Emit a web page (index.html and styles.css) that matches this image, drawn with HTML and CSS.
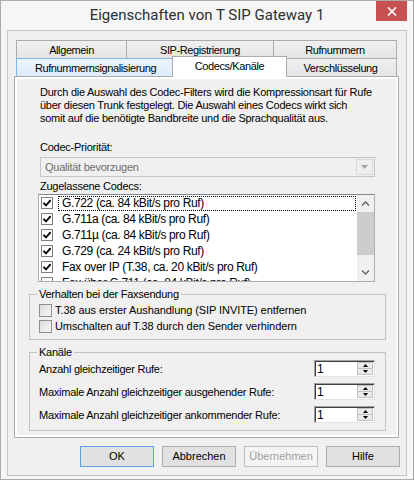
FILE: index.html
```html
<!DOCTYPE html>
<html lang="de">
<head>
    <meta charset="UTF-8">
    <meta name="viewport" content="width=device-width, initial-scale=1.0">
    <title>Eigenschaften von T SIP Gateway 1</title>
    <link rel="stylesheet" href="styles.css">
</head>
<body>
    <div class="window">
        <div class="titlebar">
            <span class="title">Eigenschaften von T SIP Gateway 1</span>
            <span class="close">
                <svg width="10" height="9" viewBox="0 0 10 9"><path d="M1 0.5 L9 8.5 M9 0.5 L1 8.5" stroke="#fff" stroke-width="1.7"/></svg>
            </span>
        </div>

        <div class="client">
            <div class="tabrow back">
                <div class="tab">Allgemein</div>
                <div class="tab">SIP-Registrierung</div>
                <div class="tab">Rufnummern</div>
            </div>
            <div class="tabrow front">
                <div class="tab hot">Rufnummernsignalisierung</div>
                <div class="tab active">Codecs/Kanäle</div>
                <div class="tab">Verschlüsselung</div>
            </div>

            <div class="pane">
                <div class="page">
                    <p class="intro">Durch die Auswahl des Codec-Filters wird die Kompressionsart für Rufe<br>über diesen Trunk festgelegt. Die Auswahl eines Codecs wirkt sich<br>somit auf die benötigte Bandbreite und die Sprachqualität aus.</p>

                    <div class="label first">Codec-Priorität:</div>
                    <div class="combo">
                        <span>Qualität bevorzugen</span>
                        <span class="drop">
                            <svg width="7" height="4" viewBox="0 0 7 4"><path d="M0 0 H7 L3.5 4 Z" fill="#a6a6a6"/></svg>
                        </span>
                    </div>

                    <div class="label">Zugelassene Codecs:</div>
                    <div class="listbox">
                        <ul class="items">
                            <li class="focus"><span class="lcheck on"></span><span class="name">G.722 (ca. 84 kBit/s pro Ruf)</span></li>
                            <li><span class="lcheck on"></span><span class="name">G.711a (ca. 84 kBit/s pro Ruf)</span></li>
                            <li><span class="lcheck on"></span><span class="name">G.711µ (ca. 84 kBit/s pro Ruf)</span></li>
                            <li><span class="lcheck on"></span><span class="name">G.729 (ca. 24 kBit/s pro Ruf)</span></li>
                            <li><span class="lcheck on"></span><span class="name">Fax over IP (T.38, ca. 20 kBit/s pro Ruf)</span></li>
                            <li><span class="lcheck"></span><span class="name">Fax über G.711 (ca. 84 kBit/s pro Ruf)</span></li>
                        </ul>
                        <div class="vscroll">
                            <span class="arrow">
                                <svg width="9" height="5" viewBox="0 0 9 5"><path d="M1 4.5 L4.5 1 L8 4.5" fill="none" stroke="#606060" stroke-width="1.3"/></svg>
                            </span>
                            <span class="thumb"></span>
                            <span class="track"></span>
                            <span class="arrow">
                                <svg width="9" height="5" viewBox="0 0 9 5"><path d="M1 0.5 L4.5 4 L8 0.5" fill="none" stroke="#606060" stroke-width="1.3"/></svg>
                            </span>
                        </div>
                    </div>

                    <fieldset class="group">
                        <legend>Verhalten bei der Faxsendung</legend>
                        <div class="checks">
                            <div class="check-row"><span class="box"></span>T.38 aus erster Aushandlung (SIP INVITE) entfernen</div>
                            <div class="check-row"><span class="box"></span>Umschalten auf T.38 durch den Sender verhindern</div>
                        </div>
                    </fieldset>

                    <fieldset class="group channels">
                        <legend>Kanäle</legend>
                        <div class="fields">
                            <div class="field-row">
                                <span>Anzahl gleichzeitiger Rufe:</span>
                                <span class="spin"><span class="val">1</span><span class="btns"><span class="sb up"></span><span class="sb down"></span></span></span>
                            </div>
                            <div class="field-row">
                                <span>Maximale Anzahl gleichzeitiger ausgehender Rufe:</span>
                                <span class="spin"><span class="val">1</span><span class="btns"><span class="sb up"></span><span class="sb down"></span></span></span>
                            </div>
                            <div class="field-row">
                                <span>Maximale Anzahl gleichzeitiger ankommender Rufe:</span>
                                <span class="spin"><span class="val">1</span><span class="btns"><span class="sb up"></span><span class="sb down"></span></span></span>
                            </div>
                        </div>
                    </fieldset>
                </div>
            </div>

            <div class="buttons">
                <button class="btn default">OK</button>
                <button class="btn">Abbrechen</button>
                <button class="btn" disabled>Übernehmen</button>
                <button class="btn">Hilfe</button>
            </div>
        </div>
    </div>
</body>
</html>
```

FILE: styles.css
```css
*{
    box-sizing: border-box;
}
body{
    margin: 0;
    background-color: #f6f6f6;
    font-family: "Liberation Sans", Arial, sans-serif;
    font-size: 11px;
    letter-spacing: -0.25px;
    color: #000;
}

.window{
    width: 414px;
    height: 480px;
    border: 1px solid #acacac;
    background-color: #f6f6f6;
    display: flex;
    flex-direction: column;
}

/* title bar */
.titlebar{
    height: 29px;
    flex: none;
    display: grid;
    grid-template-columns: 1fr auto 1fr;
}
.title{
    grid-column: 2;
    font-family: Roboto, "Liberation Sans", sans-serif;
    font-size: 15px;
    line-height: 29px;
    letter-spacing: 0;
    color: #2f2f2f;
    white-space: nowrap;
}
.close{
    grid-column: 3;
    justify-self: end;
    width: 31px;
    height: 20px;
    margin-right: 6px;
    background-color: #c75050;
    display: flex;
    align-items: center;
    justify-content: center;
}

.client{
    flex: 1;
    margin: 0 6px 6px;
    border: 1px solid #c6c6c6;
    background-color: #f0f0f0;
    padding: 9px 7px 8px 6px;
}

/* tabs */
.tabrow{
    display: grid;
    grid-template-rows: 18px;
    margin-left: 2px;
}
.tabrow.back{
    grid-template-columns: 110px 147px 124px;
}
.tabrow.front{
    grid-template-columns: 158px 110px 113px;
}
.tab{
    border: 1px solid #acacac;
    border-bottom: 0;
    margin-right: -1px;
    background: linear-gradient(#f0f0f0, #e5e5e5);
    text-align: center;
    padding-top: 3px;
    line-height: 13px;
    letter-spacing: -0.4px;
    white-space: nowrap;
}
.tab:last-child{
    margin-right: 0;
}
.tab.hot{
    background: linear-gradient(#ecf4fc, #dcecfc);
    border-color: #7eb4ea;
    position: relative;
    z-index: 1;
}
.tab.active{
    background: #fff;
    margin: -2px -3px -1px -2px;
    position: relative;
    z-index: 2;
}

.pane{
    border: 1px solid #acacac;
    background-color: #fff;
    padding: 2px;
}
.page{
    background-color: #f0f0f0;
    padding: 7px 10px 4px 12px;
}

.intro{
    margin: 0 11px;
    line-height: 13px;
    white-space: nowrap;
}
.label{
    margin: 3px 11px 0;
    line-height: 13px;
}
.label.first{
    margin-top: 16px;
}

/* disabled combo box */
.combo{
    margin: 3px 11px 0;
    height: 20px;
    border: 1px solid #c5c5c5;
    background-color: #f0f0f0;
    color: #6d6d6d;
    padding-left: 4px;
    display: flex;
    align-items: center;
}
.drop{
    margin-left: auto;
    margin-right: 1px;
    width: 17px;
    height: 16px;
    border: 1px solid #d9d9d9;
    background-color: #efefef;
    display: flex;
    align-items: center;
    justify-content: center;
}

/* checked list */
.listbox{
    margin: 1px 11px 0 9px;
    height: 88px;
    border: 1px solid #abadb3;
    border-top-color: #828790;
    background-color: #fff;
    display: flex;
}
.items{
    list-style: none;
    margin: 0;
    padding: 0;
    flex: 1;
    overflow: hidden;
}
.items li{
    height: 16px;
    padding-left: 2px;
    display: flex;
    align-items: center;
    white-space: nowrap;
    font-size: 12px;
    letter-spacing: -0.35px;
}
.lcheck{
    width: 12px;
    height: 12px;
    flex: none;
    border: 1px solid #7d7d7d;
    background: #fff center / 10px 10px no-repeat;
}
.lcheck.on{
    background-image: url("data:image/svg+xml,%3Csvg xmlns='http://www.w3.org/2000/svg' viewBox='0 0 10 10'%3E%3Cpath d='M1.5 4.8 L4 7.3 L8.6 2.2' fill='none' stroke='%23000' stroke-width='1.9'/%3E%3C/svg%3E");
}
.name{
    flex: 1;
    margin: 0 1px 0 5px;
    padding: 0 3px;
    line-height: 13px;
    border: 1px dotted transparent;
}
.items li.focus .name{
    border-color: #000;
}

.vscroll{
    width: 17px;
    flex: none;
    background-color: #f0f0f0;
    display: flex;
    flex-direction: column;
}
.vscroll .arrow{
    height: 17px;
    display: flex;
    align-items: center;
    justify-content: center;
}
.vscroll .thumb{
    height: 43px;
    background-color: #cdcdcd;
}
.vscroll .track{
    flex: 1;
}

/* group boxes */
.group{
    margin: 6px 0 0;
    padding: 3px 10px 6px 9px;
    border: 1px solid #c2c2c2;
    min-width: 0;
}
.group legend{
    padding: 0 2px;
    margin-left: -2px;
    line-height: 13px;
}
.checks{
    display: flex;
    flex-direction: column;
    gap: 3px;
}
.check-row{
    height: 13px;
    line-height: 13px;
    display: flex;
    align-items: center;
    white-space: nowrap;
    letter-spacing: -0.08px;
}
.box{
    width: 13px;
    height: 13px;
    margin-right: 3px;
    border: 1px solid #8f8f8f;
    background: linear-gradient(135deg, #dcdcdc, #f7f7f7);
}

.channels{
    padding-bottom: 7px;
}
.fields{
    margin-top: -2px;
    display: flex;
    flex-direction: column;
    gap: 6px;
}
.field-row{
    height: 17px;
    display: flex;
    align-items: center;
    justify-content: space-between;
    white-space: nowrap;
}

/* spin edit */
.spin{
    width: 61px;
    height: 17px;
    display: flex;
    border: 1px solid;
    border-color: #a0a0a0 #e3e3e3 #e3e3e3 #a0a0a0;
    box-shadow: inset 1px 1px 0 #404040;
    background-color: #fff;
}
.spin .val{
    flex: 1;
    padding-left: 2px;
    padding-top: 1px;
    font-size: 12px;
    line-height: 14px;
}
.spin .btns{
    width: 16px;
    margin: 1px 1px 1px 0;
    display: flex;
    flex-direction: column;
}
.sb{
    flex: 1;
    border: 1px solid #c2c2c2;
    background: #eaeaea center / 5px 3px no-repeat;
}
.sb.up{
    border-bottom: 0;
    background-image: url("data:image/svg+xml,%3Csvg xmlns='http://www.w3.org/2000/svg' viewBox='0 0 5 3'%3E%3Cpath d='M0 3 H5 L2.5 0 Z'/%3E%3C/svg%3E");
}
.sb.down{
    background-image: url("data:image/svg+xml,%3Csvg xmlns='http://www.w3.org/2000/svg' viewBox='0 0 5 3'%3E%3Cpath d='M0 0 H5 L2.5 3 Z'/%3E%3C/svg%3E");
}

/* dialog buttons */
.buttons{
    display: flex;
    justify-content: flex-end;
    gap: 8px;
    margin: 8px -1px 0 0;
}
.btn{
    width: 74px;
    height: 21px;
    padding: 0;
    border: 1px solid #adadad;
    background-color: #e1e1e1;
    font: inherit;
    color: #000;
    line-height: 19px;
}
.btn.default{
    border-color: #5a9ee6;
}
.btn:disabled{
    border-color: #bfbfbf;
    background-color: #f4f4f4;
    color: #a0a0a0;
}
```
